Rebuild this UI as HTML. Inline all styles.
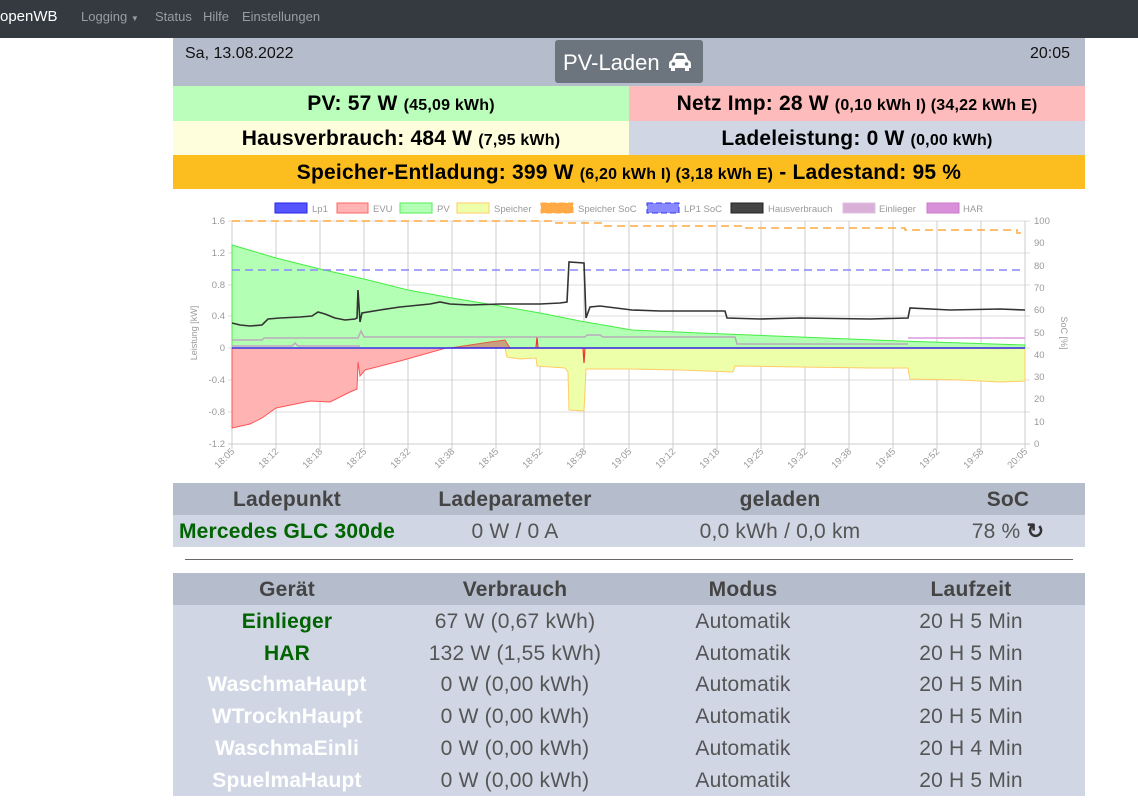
<!DOCTYPE html>
<html><head><meta charset="utf-8"><style>
*{box-sizing:border-box;margin:0;padding:0}
body{width:1138px;height:809px;overflow:hidden;background:#fff;font-family:"Liberation Sans",sans-serif;position:relative}
.nav{position:absolute;left:0;top:0;width:1138px;height:38px;background:#343a40}
.nav span{position:absolute;top:9px;font-size:13px;color:#9a9da0}
.abs{position:absolute}
.c{text-align:center;font-weight:bold;font-size:21px;color:#000;position:absolute;line-height:36px;letter-spacing:0.2px}
.c small{font-size:16px}
table{position:absolute;left:173px;width:912px;border-collapse:collapse;table-layout:fixed}
td,th{text-align:center;font-size:21px;color:#444;padding:2px 0 0 0;letter-spacing:0.2px}
th{background:#b5bccb;height:32px;font-weight:bold}
td{background:#d0d6e4;height:31.8px;color:#555}
.g{color:#006400;font-weight:bold}
.w{color:#fff;font-weight:bold}
</style></head><body>
<div class="nav">
<span style="left:0;color:#fff;font-size:15px;top:8px">openWB</span>
<span style="left:81px">Logging <span style="position:static;font-size:8px">▼</span></span>
<span style="left:155px">Status</span>
<span style="left:203px">Hilfe</span>
<span style="left:242px">Einstellungen</span>
</div>
<div class="abs" style="left:173px;top:38px;width:912px;height:48px;background:#b5bccb"></div>
<div class="abs" style="left:185px;top:45px;font-size:16px;color:#111">Sa, 13.08.2022</div>
<div class="abs" style="left:1030px;top:45px;font-size:16px;color:#111">20:05</div>
<div class="abs" style="left:555px;top:40px;width:148px;height:43px;background:#6c757d;border-radius:3px;color:#fff;font-size:22px;line-height:45px;padding-left:8px">PV-Laden
<svg style="position:absolute;left:113px;top:13px" width="24" height="18" viewBox="0 0 24 18"><path fill="#fff" d="M4 7 L6 2 Q7 0 9 0 H15 Q17 0 18 2 L20 7 Q23 8 23 11 V15 H21 V18 H17 V15 H7 V18 H3 V15 H1 V11 Q1 8 4 7Z M7 6 H17 L15.5 2.5 H8.5Z"/><circle cx="5.5" cy="11" r="1.8" fill="#6c757d"/><circle cx="18.5" cy="11" r="1.8" fill="#6c757d"/></svg></div>
<div class="c" style="left:173px;top:86px;width:456px;height:35px;background:#bbfebb">PV: 57 W <small>(45,09 kWh)</small></div>
<div class="c" style="left:629px;top:86px;width:456px;height:35px;background:#febbbb">Netz Imp: 28 W <small>(0,10 kWh I) (34,22 kWh E)</small></div>
<div class="c" style="left:173px;top:121px;width:456px;height:34px;background:#fefedd">Hausverbrauch: 484 W <small>(7,95 kWh)</small></div>
<div class="c" style="left:629px;top:121px;width:456px;height:34px;background:#d0d6e4">Ladeleistung: 0 W <small>(0,00 kWh)</small></div>
<div class="c" style="left:173px;top:155px;width:912px;height:34px;background:#fcbd1f">Speicher-Entladung: 399 W <small>(6,20 kWh I) (3,18 kWh E)</small> - Ladestand: 95 %</div>

<svg class="abs" style="left:173px;top:190px" width="912" height="290" viewBox="173 190 912 290" font-family="Liberation Sans,sans-serif" font-size="9.5" fill="#999">
<g stroke="#ddd" stroke-width="1">
<line x1="228" y1="221" x2="1030" y2="221"/><line x1="228" y1="253" x2="1030" y2="253"/><line x1="228" y1="285" x2="1030" y2="285"/><line x1="228" y1="316" x2="1030" y2="316"/><line x1="228" y1="348" x2="1030" y2="348"/><line x1="228" y1="380" x2="1030" y2="380"/><line x1="228" y1="412" x2="1030" y2="412"/><line x1="228" y1="444" x2="1030" y2="444" stroke="#ccc"/>
<g stroke="#ccc">
<line x1="232" y1="221" x2="232" y2="449"/><line x1="276" y1="221" x2="276" y2="449"/><line x1="320" y1="221" x2="320" y2="449"/><line x1="364" y1="221" x2="364" y2="449"/><line x1="408" y1="221" x2="408" y2="449"/><line x1="452" y1="221" x2="452" y2="449"/><line x1="496" y1="221" x2="496" y2="449"/><line x1="540" y1="221" x2="540" y2="449"/><line x1="584" y1="221" x2="584" y2="449"/><line x1="629" y1="221" x2="629" y2="449"/><line x1="673" y1="221" x2="673" y2="449"/><line x1="717" y1="221" x2="717" y2="449"/><line x1="761" y1="221" x2="761" y2="449"/><line x1="805" y1="221" x2="805" y2="449"/><line x1="849" y1="221" x2="849" y2="449"/><line x1="893" y1="221" x2="893" y2="449"/><line x1="937" y1="221" x2="937" y2="449"/><line x1="981" y1="221" x2="981" y2="449"/><line x1="1025" y1="221" x2="1025" y2="449"/>
</g></g>
<path d="M232,245 L276,258 320,269 364,279 408,290 452,298 500,306 540,313 580,321 632,330 700,333 800,337 900,341 1025,345 L1025,348 L232,348Z" fill="#b3ffb3" stroke="#44ee44" stroke-width="1"/>
<path d="M232,428 L250,424 262,418 276,408 310,401 330,402 350,392 357,389 358,362 360,376 365,370 400,361 446,348 L232,348Z" fill="#ffb3b3" stroke="#ff5555" stroke-width="1"/>
<path d="M450,348 L470,345 490,342 505,340 510,348Z" fill="#c9a080" stroke="#e06040" stroke-width="1"/>
<path d="M505,348 L507,357 520,359 536,358 537,366 565,368 568,372 569,410 584,411 586,369 632,369 680,370 733,372 735,366 800,367 870,368 908,368 910,379 960,380 1000,382 1025,381 L1025,348Z" fill="#eeffaa" stroke="#ffcc66" stroke-width="1"/>
<path d="M446,348 L536,348 537,337 538,348 583,348 584,363 585,348 1025,348" fill="none" stroke="#ee3333" stroke-width="1.2"/>
<path d="M232,346 L292,346 295,343 298,346 360,346" fill="none" stroke="#c8a0c8" stroke-width="1.5"/>
<path d="M232,340 L262,340 264,338 358,338 361,331 364,337 585,337 587,335 600,335 603,337 735,337 737,344 908,344" fill="none" stroke="#bbaabb" stroke-width="1.5"/>
<path d="M908,338 L1025,338" fill="none" stroke="#dd99dd" stroke-width="1.5"/>
<line x1="232" y1="348" x2="1025" y2="348" stroke="#3333ee" stroke-width="1.5"/>
<line x1="232" y1="270" x2="1025" y2="270" stroke="#8888ff" stroke-width="1.5" stroke-dasharray="8,5"/>
<path d="M232,221 L553,221 553,223 603,223 603,226 746,226 746,228 905,228 905,230 1017,230 1017,233 1025,233" fill="none" stroke="#ffaa44" stroke-width="1.5" stroke-dasharray="8,5"/>
<path d="M232,323 L240,325 250,326 262,325 268,319 280,318 300,317 312,316 318,312 325,314 335,318 345,320 355,319 357,318 358,290 360,322 362,313 380,310 400,307 430,304 440,302 450,304 470,305 500,304 540,304 560,303 567,302 569,262 584,263 586,318 590,307 600,306 632,310 660,311 700,311 725,311 727,318 760,319 800,318 870,319 908,318 910,308 950,310 1000,309 1025,310" fill="none" stroke="#333" stroke-width="1.6"/>
<g text-anchor="end">
<text x="225" y="224">1.6</text><text x="225" y="256">1.2</text><text x="225" y="288">0.8</text><text x="225" y="319">0.4</text><text x="225" y="351">0</text><text x="225" y="383">-0.4</text><text x="225" y="415">-0.8</text><text x="225" y="447">-1.2</text>
</g>
<g>
<text x="1034" y="224">100</text><text x="1034" y="246">90</text><text x="1034" y="269">80</text><text x="1034" y="291">70</text><text x="1034" y="313">60</text><text x="1034" y="336">50</text><text x="1034" y="358">40</text><text x="1034" y="380">30</text><text x="1034" y="402">20</text><text x="1034" y="425">10</text><text x="1034" y="447">0</text>
</g>
<text transform="translate(197,333) rotate(-90)" text-anchor="middle" font-size="9">Leistung [kW]</text>
<text transform="translate(1061,333) rotate(90)" text-anchor="middle" font-size="9">SoC [%]</text>
<g text-anchor="end">
<text transform="translate(235,452) rotate(-45)">18:05</text><text transform="translate(279,452) rotate(-45)">18:12</text><text transform="translate(323,452) rotate(-45)">18:18</text><text transform="translate(367,452) rotate(-45)">18:25</text><text transform="translate(411,452) rotate(-45)">18:32</text><text transform="translate(455,452) rotate(-45)">18:38</text><text transform="translate(499,452) rotate(-45)">18:45</text><text transform="translate(543,452) rotate(-45)">18:52</text><text transform="translate(587,452) rotate(-45)">18:58</text><text transform="translate(632,452) rotate(-45)">19:05</text><text transform="translate(676,452) rotate(-45)">19:12</text><text transform="translate(720,452) rotate(-45)">19:18</text><text transform="translate(764,452) rotate(-45)">19:25</text><text transform="translate(808,452) rotate(-45)">19:32</text><text transform="translate(852,452) rotate(-45)">19:38</text><text transform="translate(896,452) rotate(-45)">19:45</text><text transform="translate(940,452) rotate(-45)">19:52</text><text transform="translate(984,452) rotate(-45)">19:58</text><text transform="translate(1028,452) rotate(-45)">20:05</text>
</g>
<g font-size="9.5">
<rect x="275" y="203" width="32" height="10" fill="#5555ff" stroke="#2222ee"/><text x="312" y="212">Lp1</text>
<rect x="337" y="203" width="31" height="10" fill="#ffb3b3" stroke="#ff6666"/><text x="373" y="212">EVU</text>
<rect x="400" y="203" width="32" height="10" fill="#b3ffb3" stroke="#55ee55"/><text x="437" y="212">PV</text>
<rect x="457" y="203" width="32" height="10" fill="#eeffaa" stroke="#ffcc66"/><text x="494" y="212">Speicher</text>
<rect x="541" y="203" width="32" height="10" fill="#ffaa44" stroke="#ffaa44" stroke-dasharray="6,3"/><text x="578" y="212">Speicher SoC</text>
<rect x="647" y="203" width="32" height="10" fill="#8888ff" stroke="#3333ee" stroke-dasharray="6,3"/><text x="684" y="212">LP1 SoC</text>
<rect x="731" y="203" width="32" height="10" fill="#444" stroke="#222"/><text x="768" y="212">Hausverbrauch</text>
<rect x="843" y="203" width="32" height="10" fill="#d8b0d8" stroke="#e0c0e0"/><text x="879" y="212">Einlieger</text>
<rect x="927" y="203" width="32" height="10" fill="#d890d8" stroke="#cc77cc"/><text x="963" y="212">HAR</text>
</g>
</svg>

<table style="top:483px">
<colgroup><col style="width:228px"><col style="width:228px"><col style="width:302px"><col style="width:154px"></colgroup>
<tr><th>Ladepunkt</th><th>Ladeparameter</th><th>geladen</th><th>SoC</th></tr>
<tr><td class="g" style="height:31px">Mercedes GLC 300de</td><td>0 W / 0 A</td><td>0,0 kWh / 0,0 km</td><td>78 % <b style="color:#333">↻</b></td></tr>
</table>
<div class="abs" style="left:185px;top:559px;width:888px;height:1px;background:#666"></div>
<table style="top:573px">
<tr><th style="height:31px">Gerät</th><th>Verbrauch</th><th>Modus</th><th>Laufzeit</th></tr>
<tr><td class="g">Einlieger</td><td>67 W (0,67 kWh)</td><td>Automatik</td><td>20 H 5 Min</td></tr>
<tr><td class="g">HAR</td><td>132 W (1,55 kWh)</td><td>Automatik</td><td>20 H 5 Min</td></tr>
<tr><td class="w">WaschmaHaupt</td><td>0 W (0,00 kWh)</td><td>Automatik</td><td>20 H 5 Min</td></tr>
<tr><td class="w">WTrocknHaupt</td><td>0 W (0,00 kWh)</td><td>Automatik</td><td>20 H 5 Min</td></tr>
<tr><td class="w">WaschmaEinli</td><td>0 W (0,00 kWh)</td><td>Automatik</td><td>20 H 4 Min</td></tr>
<tr><td class="w">SpuelmaHaupt</td><td>0 W (0,00 kWh)</td><td>Automatik</td><td>20 H 5 Min</td></tr>
</table>
</body></html>
